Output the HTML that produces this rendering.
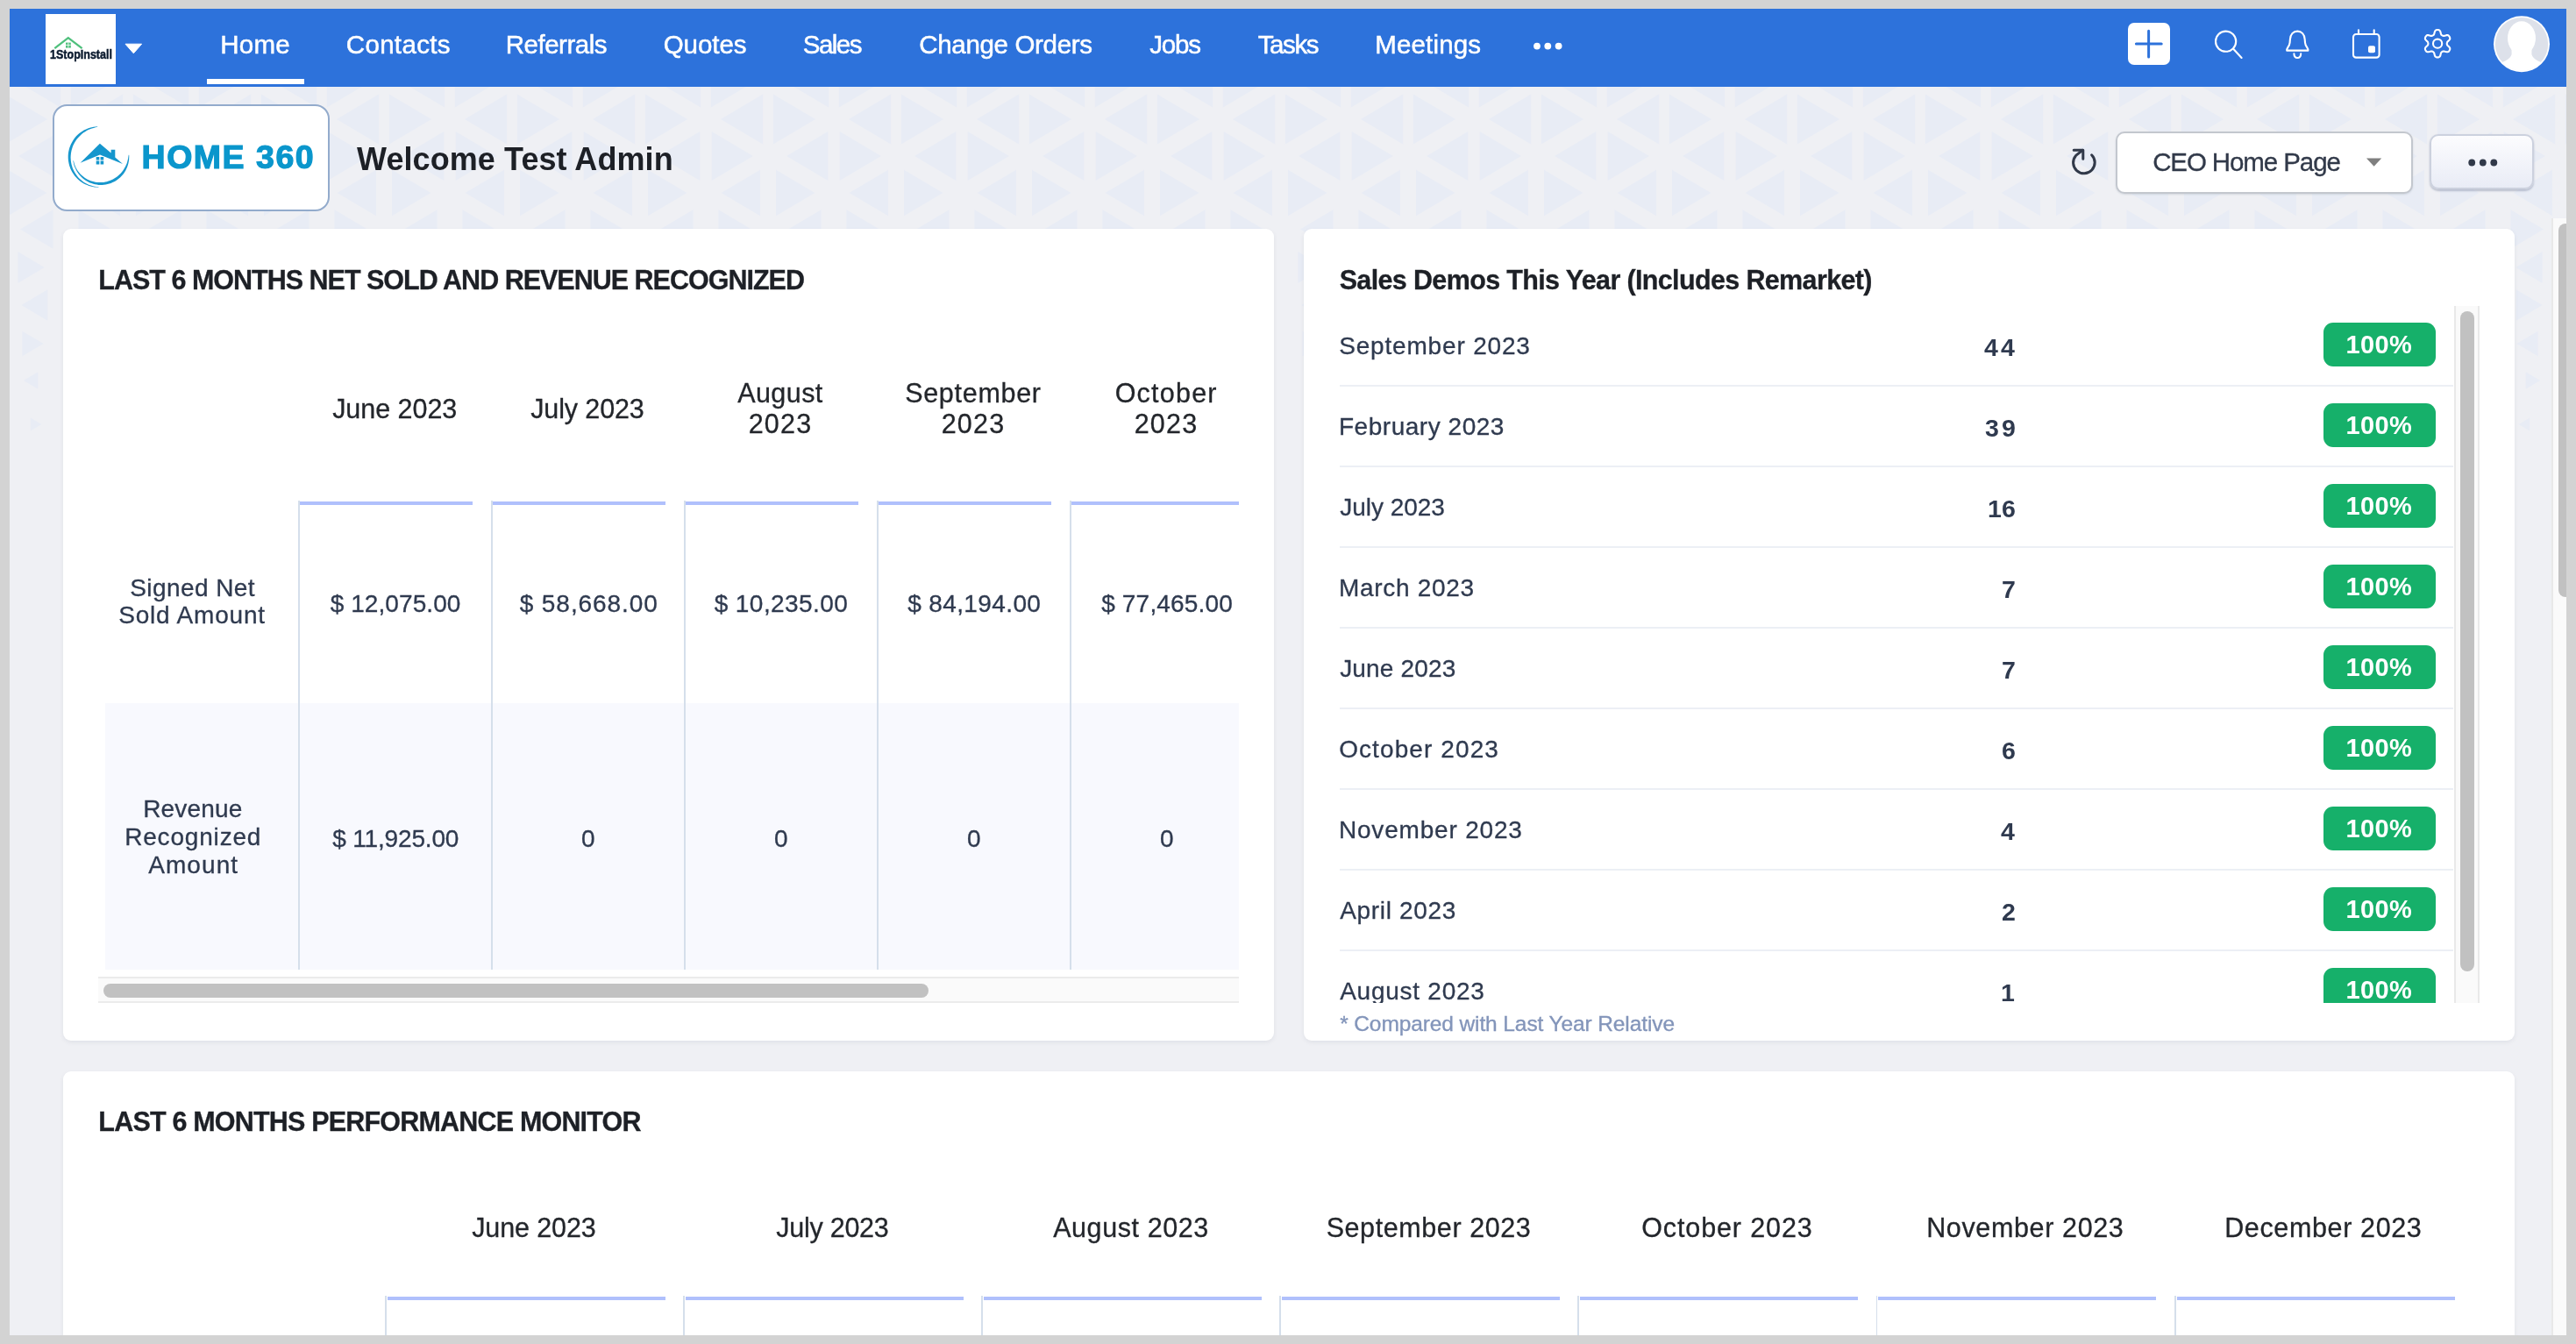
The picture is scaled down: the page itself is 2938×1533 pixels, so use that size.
<!DOCTYPE html>
<html lang="en"><head><meta charset="utf-8"><title>Home - CEO Home Page</title>
<style>
*{box-sizing:border-box}
html,body{margin:0;padding:0;width:2938px;height:1533px;background:#d3d3d3}
body{position:relative;font-family:"Liberation Sans",sans-serif}
#frame{position:absolute;left:11px;top:10px;width:2916px;height:1513px;overflow:hidden;background:#eff0f4}
#page{will-change:transform;position:absolute;left:-11px;top:-10px;width:2938px;height:1533px}
#page svg{position:absolute;left:0;top:0;overflow:visible}
.t{position:absolute;white-space:nowrap;margin:0;padding:0;font-weight:400;text-decoration:none;display:block}
.abs{position:absolute}
#navbar{position:absolute;left:11px;top:10px;width:2916px;height:89px;background:#2d72db}
#logo{position:absolute;left:52px;top:16px;width:80px;height:80px;background:#fff}
#homeul{position:absolute;left:236px;top:90.3px;width:111.3px;height:6.1px;background:#fff}
#h360box{position:absolute;left:59.8px;top:119px;width:316px;height:122.2px;background:#fff;border:2.4px solid #93abcc;border-radius:16.5px}
#ddbox{position:absolute;left:2413px;top:149.7px;width:339.2px;height:71px;background:#fff;border:2.2px solid #c3c7ce;border-radius:10px;box-shadow:0 1px 2px rgba(120,130,150,.22)}
#morebtn{position:absolute;left:2771.4px;top:152.9px;width:118.8px;height:63.6px;border:2.2px solid #ccd1de;border-radius:10px;background:linear-gradient(#fcfcfe,#e9ecf6);box-shadow:0 1.5px 2px rgba(110,120,150,.4)}
.box{position:absolute;background:#fff;border-radius:9px;box-shadow:0 2px 5px rgba(50,60,90,.08)}
#b1{left:72px;top:261px;width:1381px;height:926px}
#b2{left:1487px;top:261px;width:1381px;height:926px}
#b3{left:72px;top:1221.5px;width:2796px;height:400px}
.vl{position:absolute;width:1.5px;background:#d5dfeb}
.bar{position:absolute;height:4.4px;background:#b0c0fc}
#alt{position:absolute;left:120px;top:802px;width:1293px;height:304px;background:#f8f9fe}
#hs{position:absolute;left:112px;top:1114.2px;width:1301px;height:30px;background:#fafafa;border-top:2px solid #ebebeb;border-bottom:2px solid #ebebeb}
#hst{position:absolute;left:118px;top:1122.4px;width:941px;height:15.8px;border-radius:8px;background:#c1c1c1}
#list{position:absolute;left:0;top:0;width:2938px;height:1144px;overflow:hidden}
.sep{position:absolute;left:1528px;width:1270px;height:2px;background:#eceff5}
.badge{position:absolute;left:2650px;width:128px;height:50px;border-radius:11px;background:#16b06a}
#vs{position:absolute;left:2799px;top:348.5px;width:28.5px;height:795.5px;background:#fafafa;border-left:2px solid #e9e9e9;border-right:2px solid #e9e9e9}
#vst{position:absolute;left:2806px;top:354.5px;width:16px;height:753.5px;border-radius:8px;background:#c1c1c1}
#ps{position:absolute;left:2910px;top:249px;width:17px;height:1280px;background:#fafafa;border-left:2px solid #e8e8e8}
#pst{position:absolute;left:2918px;top:255px;width:16px;height:426px;border-radius:8px;background:#c1c1c1}

</style></head>
<body>
<div id="frame"><div id="page">
<svg id="tri" width="2938" height="700" viewBox="0 0 2938 700" aria-hidden="true"><path fill="#e8ecf5" d="M69.1 65.5V122.5L20.9 94.0zM80.9 65.5V122.5L129.1 94.0zM215.1 65.5V122.5L166.9 94.0zM226.9 65.5V122.5L275.1 94.0zM361.1 65.5V122.5L312.9 94.0zM372.9 65.5V122.5L421.1 94.0zM507.1 65.5V122.5L458.9 94.0zM518.9 65.5V122.5L567.1 94.0zM653.1 65.5V122.5L604.9 94.0zM664.9 65.5V122.5L713.1 94.0zM799.1 65.5V122.5L750.9 94.0zM810.9 65.5V122.5L859.1 94.0zM945.1 65.5V122.5L896.9 94.0zM956.9 65.5V122.5L1005.1 94.0zM1091.1 65.5V122.5L1042.9 94.0zM1102.9 65.5V122.5L1151.1 94.0zM1237.1 65.5V122.5L1188.9 94.0zM1248.9 65.5V122.5L1297.1 94.0zM1383.1 65.5V122.5L1334.9 94.0zM1394.9 65.5V122.5L1443.1 94.0zM1529.1 65.5V122.5L1480.9 94.0zM1540.9 65.5V122.5L1589.1 94.0zM1675.1 65.5V122.5L1626.9 94.0zM1686.9 65.5V122.5L1735.1 94.0zM1821.1 65.5V122.5L1772.9 94.0zM1832.9 65.5V122.5L1881.1 94.0zM1967.1 65.5V122.5L1918.9 94.0zM1978.9 65.5V122.5L2027.1 94.0zM2113.1 65.5V122.5L2064.9 94.0zM2124.9 65.5V122.5L2173.1 94.0zM2259.1 65.5V122.5L2210.9 94.0zM2270.9 65.5V122.5L2319.1 94.0zM2405.1 65.5V122.5L2356.9 94.0zM2416.9 65.5V122.5L2465.1 94.0zM2551.1 65.5V122.5L2502.9 94.0zM2562.9 65.5V122.5L2611.1 94.0zM2697.1 65.5V122.5L2648.9 94.0zM2708.9 65.5V122.5L2757.1 94.0zM2843.1 65.5V122.5L2794.9 94.0zM2854.9 65.5V122.5L2903.1 94.0zM5.9 107.5V164.5L54.1 136.0zM140.1 107.5V164.5L91.9 136.0zM151.9 107.5V164.5L200.1 136.0zM286.1 107.5V164.5L237.9 136.0zM297.9 107.5V164.5L346.1 136.0zM432.1 107.5V164.5L383.9 136.0zM443.9 107.5V164.5L492.1 136.0zM578.1 107.5V164.5L529.9 136.0zM589.9 107.5V164.5L638.1 136.0zM724.1 107.5V164.5L675.9 136.0zM735.9 107.5V164.5L784.1 136.0zM870.1 107.5V164.5L821.9 136.0zM881.9 107.5V164.5L930.1 136.0zM1016.1 107.5V164.5L967.9 136.0zM1027.9 107.5V164.5L1076.1 136.0zM1162.1 107.5V164.5L1113.9 136.0zM1173.9 107.5V164.5L1222.1 136.0zM1308.1 107.5V164.5L1259.9 136.0zM1319.9 107.5V164.5L1368.1 136.0zM1454.1 107.5V164.5L1405.9 136.0zM1465.9 107.5V164.5L1514.1 136.0zM1600.1 107.5V164.5L1551.9 136.0zM1611.9 107.5V164.5L1660.1 136.0zM1746.1 107.5V164.5L1697.9 136.0zM1757.9 107.5V164.5L1806.1 136.0zM1892.1 107.5V164.5L1843.9 136.0zM1903.9 107.5V164.5L1952.1 136.0zM2038.1 107.5V164.5L1989.9 136.0zM2049.9 107.5V164.5L2098.1 136.0zM2184.1 107.5V164.5L2135.9 136.0zM2195.9 107.5V164.5L2244.1 136.0zM2330.1 107.5V164.5L2281.9 136.0zM2341.9 107.5V164.5L2390.1 136.0zM2476.1 107.5V164.5L2427.9 136.0zM2487.9 107.5V164.5L2536.1 136.0zM2622.1 107.5V164.5L2573.9 136.0zM2633.9 107.5V164.5L2682.1 136.0zM2768.1 107.5V164.5L2719.9 136.0zM2779.9 107.5V164.5L2828.1 136.0zM2914.1 107.5V164.5L2865.9 136.0zM2925.9 107.5V164.5L2974.1 136.0zM68.3 150.1V205.9L21.1 178.0zM81.7 150.1V205.9L128.9 178.0zM214.3 150.1V205.9L167.1 178.0zM227.7 150.1V205.9L274.9 178.0zM360.3 150.1V205.9L313.1 178.0zM373.7 150.1V205.9L420.9 178.0zM506.3 150.1V205.9L459.1 178.0zM519.7 150.1V205.9L566.9 178.0zM652.3 150.1V205.9L605.1 178.0zM665.7 150.1V205.9L712.9 178.0zM798.3 150.1V205.9L751.1 178.0zM811.7 150.1V205.9L858.9 178.0zM944.3 150.1V205.9L897.1 178.0zM957.7 150.1V205.9L1004.9 178.0zM1090.3 150.1V205.9L1043.1 178.0zM1103.7 150.1V205.9L1150.9 178.0zM1236.3 150.1V205.9L1189.1 178.0zM1249.7 150.1V205.9L1296.9 178.0zM1382.3 150.1V205.9L1335.1 178.0zM1395.7 150.1V205.9L1442.9 178.0zM1528.3 150.1V205.9L1481.1 178.0zM1541.7 150.1V205.9L1588.9 178.0zM1674.3 150.1V205.9L1627.1 178.0zM1687.7 150.1V205.9L1734.9 178.0zM1820.3 150.1V205.9L1773.1 178.0zM1833.7 150.1V205.9L1880.9 178.0zM1966.3 150.1V205.9L1919.1 178.0zM1979.7 150.1V205.9L2026.9 178.0zM2112.3 150.1V205.9L2065.1 178.0zM2125.7 150.1V205.9L2172.9 178.0zM2258.3 150.1V205.9L2211.1 178.0zM2271.7 150.1V205.9L2318.9 178.0zM2404.3 150.1V205.9L2357.1 178.0zM2417.7 150.1V205.9L2464.9 178.0zM2550.3 150.1V205.9L2503.1 178.0zM2563.7 150.1V205.9L2610.9 178.0zM2696.3 150.1V205.9L2649.1 178.0zM2709.7 150.1V205.9L2756.9 178.0zM2842.3 150.1V205.9L2795.1 178.0zM2855.7 150.1V205.9L2902.9 178.0zM9.0 193.8V246.2L53.4 220.0zM137.0 193.8V246.2L92.6 220.0zM155.0 193.8V246.2L199.4 220.0zM283.0 193.8V246.2L238.6 220.0zM301.0 193.8V246.2L345.4 220.0zM429.0 193.8V246.2L384.6 220.0zM447.0 193.8V246.2L491.4 220.0zM575.0 193.8V246.2L530.6 220.0zM593.0 193.8V246.2L637.4 220.0zM721.0 193.8V246.2L676.6 220.0zM739.0 193.8V246.2L783.4 220.0zM867.0 193.8V246.2L822.6 220.0zM885.0 193.8V246.2L929.4 220.0zM1013.0 193.8V246.2L968.6 220.0zM1031.0 193.8V246.2L1075.4 220.0zM1159.0 193.8V246.2L1114.6 220.0zM1177.0 193.8V246.2L1221.4 220.0zM1305.0 193.8V246.2L1260.6 220.0zM1323.0 193.8V246.2L1367.4 220.0zM1451.0 193.8V246.2L1406.6 220.0zM1469.0 193.8V246.2L1513.4 220.0zM1597.0 193.8V246.2L1552.6 220.0zM1615.0 193.8V246.2L1659.4 220.0zM1743.0 193.8V246.2L1698.6 220.0zM1761.0 193.8V246.2L1805.4 220.0zM1889.0 193.8V246.2L1844.6 220.0zM1907.0 193.8V246.2L1951.4 220.0zM2035.0 193.8V246.2L1990.6 220.0zM2053.0 193.8V246.2L2097.4 220.0zM2181.0 193.8V246.2L2136.6 220.0zM2199.0 193.8V246.2L2243.4 220.0zM2327.0 193.8V246.2L2282.6 220.0zM2345.0 193.8V246.2L2389.4 220.0zM2473.0 193.8V246.2L2428.6 220.0zM2491.0 193.8V246.2L2535.4 220.0zM2619.0 193.8V246.2L2574.6 220.0zM2637.0 193.8V246.2L2681.4 220.0zM2765.0 193.8V246.2L2720.6 220.0zM2783.0 193.8V246.2L2827.4 220.0zM2911.0 193.8V246.2L2866.6 220.0zM60.5 239.3V283.7L22.9 261.5zM89.5 239.3V283.7L127.1 261.5zM206.5 239.3V283.7L168.9 261.5zM235.5 239.3V283.7L273.1 261.5zM352.5 239.3V283.7L314.9 261.5zM381.5 239.3V283.7L419.1 261.5zM498.5 239.3V283.7L460.9 261.5zM527.5 239.3V283.7L565.1 261.5zM644.5 239.3V283.7L606.9 261.5zM673.5 239.3V283.7L711.1 261.5zM790.5 239.3V283.7L752.9 261.5zM819.5 239.3V283.7L857.1 261.5zM936.5 239.3V283.7L898.9 261.5zM965.5 239.3V283.7L1003.1 261.5zM1082.5 239.3V283.7L1044.9 261.5zM1111.5 239.3V283.7L1149.1 261.5zM1228.5 239.3V283.7L1190.9 261.5zM1257.5 239.3V283.7L1295.1 261.5zM1374.5 239.3V283.7L1336.9 261.5zM1403.5 239.3V283.7L1441.1 261.5zM1520.5 239.3V283.7L1482.9 261.5zM1549.5 239.3V283.7L1587.1 261.5zM1666.5 239.3V283.7L1628.9 261.5zM1695.5 239.3V283.7L1733.1 261.5zM1812.5 239.3V283.7L1774.9 261.5zM1841.5 239.3V283.7L1879.1 261.5zM1958.5 239.3V283.7L1920.9 261.5zM1987.5 239.3V283.7L2025.1 261.5zM2104.5 239.3V283.7L2066.9 261.5zM2133.5 239.3V283.7L2171.1 261.5zM2250.5 239.3V283.7L2212.9 261.5zM2279.5 239.3V283.7L2317.1 261.5zM2396.5 239.3V283.7L2358.9 261.5zM2425.5 239.3V283.7L2463.1 261.5zM2542.5 239.3V283.7L2504.9 261.5zM2571.5 239.3V283.7L2609.1 261.5zM2688.5 239.3V283.7L2650.9 261.5zM2717.5 239.3V283.7L2755.1 261.5zM2834.5 239.3V283.7L2796.9 261.5zM2863.5 239.3V283.7L2901.1 261.5zM20.4 287.0V323.0L50.7 305.0zM1480.4 287.0V323.0L1510.7 305.0zM2899.6 287.0V323.0L2869.3 305.0zM54.3 330.3V365.7L24.3 348.0zM1514.3 330.3V365.7L1484.3 348.0zM2869.7 330.3V365.7L2899.7 348.0zM25.4 377.8V406.2L49.6 392.0zM1485.4 377.8V406.2L1509.6 392.0zM2894.6 377.8V406.2L2870.4 392.0zM43.3 424.3V443.7L26.9 434.0zM1503.3 424.3V443.7L1486.9 434.0zM2880.7 424.3V443.7L2897.1 434.0zM34.8 476.6V491.4L47.4 484.0zM2885.2 476.6V491.4L2872.6 484.0z"/></svg>
<nav id="nav">
<div id="navbar"></div>
<div id="logo"></div>
<div id="homeul"></div>
<svg width="2938" height="110" viewBox="0 0 2938 110" aria-hidden="true">
<g fill="none" stroke="#4fc07c" stroke-width="2.3" stroke-linecap="butt"><path d="M62.3 55.2 77.8 43.2 93.6 55.2"/></g>
<rect x="75" y="48.6" width="5.8" height="6" fill="#4fc07c"/><path d="M77.9 48.6v6M75 51.4h5.8" stroke="#fff" stroke-width=".8"/>
<path d="M143 50.2h18.6l-9.3 10.6z" fill="#fff" stroke="#fff" stroke-width="1" stroke-linejoin="round"/>
<g fill="#fff"><circle cx="1753" cy="52.6" r="3.9"/><circle cx="1765.3" cy="52.6" r="3.9"/><circle cx="1777.6" cy="52.6" r="3.9"/></g>
<rect x="2427" y="26" width="48" height="48" rx="7" fill="#fff"/>
<path d="M2436.4 50h28.8M2450.6 35.3v29.8" stroke="#2d72db" stroke-width="3" stroke-linecap="round" fill="none"/>
<g fill="none" stroke="#fff" stroke-width="2.1" stroke-linecap="round" stroke-linejoin="round">
<circle cx="2538.6" cy="47.2" r="11.6"/><path d="M2547.2 55.8 2556.6 66"/>
<path d="M2608.2 57.6C2607.6 54.6 2611.2 53.4 2611.6 48.6L2611.9 45C2612.1 39.2 2615.6 35.6 2620.3 35.6C2625 35.6 2628.5 39.2 2628.7 45L2629 48.6C2629.4 53.4 2633 54.6 2632.4 57.6Z"/>
<path d="M2616.4 61.2C2616.6 67.6 2624 67.6 2624.2 61.2"/>
<rect x="2684" y="39" width="29.6" height="26.6" rx="3.2"/><path d="M2690 34.2V39M2707.7 34.2V39"/>
<circle cx="2780.1" cy="49.7" r="5.1"/>
<path d="M2780.1 34.0L2780.8 34.0L2781.5 34.2L2782.1 34.5L2782.7 35.0L2783.2 35.8L2783.5 36.9L2783.8 38.1L2784.0 38.9L2784.3 39.5L2784.7 39.9L2785.1 40.2L2785.4 40.4L2785.9 40.7L2786.3 40.8L2786.8 40.9L2787.5 40.9L2788.3 40.7L2789.4 40.4L2790.6 40.1L2791.6 40.1L2792.3 40.3L2792.9 40.8L2793.3 41.3L2793.7 41.9L2794.0 42.5L2794.2 43.1L2794.3 43.8L2794.2 44.6L2793.7 45.4L2792.9 46.3L2792.0 47.1L2791.4 47.7L2791.0 48.3L2790.9 48.8L2790.8 49.2L2790.8 49.7L2790.8 50.2L2790.9 50.6L2791.0 51.1L2791.4 51.7L2792.0 52.3L2792.9 53.1L2793.7 54.0L2794.2 54.8L2794.3 55.6L2794.2 56.3L2794.0 56.9L2793.7 57.5L2793.3 58.1L2792.9 58.6L2792.3 59.1L2791.6 59.3L2790.6 59.3L2789.4 59.0L2788.3 58.7L2787.5 58.5L2786.8 58.5L2786.3 58.6L2785.9 58.7L2785.4 59.0L2785.1 59.2L2784.7 59.5L2784.3 59.9L2784.0 60.5L2783.8 61.3L2783.5 62.5L2783.2 63.6L2782.7 64.4L2782.1 64.9L2781.5 65.2L2780.8 65.4L2780.1 65.4L2779.4 65.4L2778.7 65.2L2778.1 64.9L2777.5 64.4L2777.0 63.6L2776.7 62.5L2776.4 61.3L2776.2 60.5L2775.9 59.9L2775.5 59.5L2775.1 59.2L2774.8 59.0L2774.3 58.7L2773.9 58.6L2773.4 58.5L2772.7 58.5L2771.9 58.7L2770.8 59.0L2769.6 59.3L2768.6 59.3L2767.9 59.1L2767.3 58.6L2766.9 58.1L2766.5 57.6L2766.2 56.9L2766.0 56.3L2765.9 55.6L2766.0 54.8L2766.5 54.0L2767.3 53.1L2768.2 52.3L2768.8 51.7L2769.2 51.1L2769.3 50.6L2769.4 50.2L2769.4 49.7L2769.4 49.2L2769.3 48.8L2769.2 48.3L2768.8 47.7L2768.2 47.1L2767.3 46.3L2766.5 45.4L2766.0 44.6L2765.9 43.8L2766.0 43.1L2766.2 42.5L2766.5 41.9L2766.9 41.3L2767.3 40.8L2767.9 40.3L2768.6 40.1L2769.6 40.1L2770.8 40.4L2771.9 40.7L2772.7 40.9L2773.4 40.9L2773.9 40.8L2774.3 40.7L2774.8 40.4L2775.1 40.2L2775.5 39.9L2775.9 39.5L2776.2 38.9L2776.4 38.1L2776.7 36.9L2777.0 35.8L2777.5 35.0L2778.1 34.5L2778.7 34.2L2779.4 34.0Z"/>
</g>
<rect x="2701" y="52.3" width="8" height="8" rx="2" fill="#fff"/>
<circle cx="2876" cy="50.2" r="32" fill="#fff"/>
<circle cx="2876" cy="50.2" r="30.2" fill="#dde1ea"/>
<g fill="#fff"><ellipse cx="2876" cy="43.5" rx="16" ry="19.2"/><path d="M2853.8 71C2858.5 69.4 2863.4 66.4 2864.6 62L2864.5 55H2887.5L2887.4 62C2888.6 66.4 2893.5 69.4 2898.2 71A30.4 30.4 0 0 1 2853.8 71Z"/></g>
</svg>

<strong class="t logo" style="left:56.90px;top:52.13px;font-size:15.5px;line-height:19px;letter-spacing:0.0px;color:#0b1a2e;font-weight:700;-webkit-text-stroke:0.5px #0b1a2e;transform:scaleX(0.8076);transform-origin:0 0">1StopInstall</strong>
<a class="t nav" style="left:251.25px;top:33.28px;font-size:29.5px;line-height:35px;letter-spacing:0.239px;color:#fff;-webkit-text-stroke:0.5px #fff">Home</a>
<a class="t nav" style="left:394.75px;top:33.28px;font-size:29.5px;line-height:35px;letter-spacing:0.333px;color:#fff;-webkit-text-stroke:0.5px #fff">Contacts</a>
<a class="t nav" style="left:576.75px;top:33.28px;font-size:29.5px;line-height:35px;letter-spacing:-0.49px;color:#fff;-webkit-text-stroke:0.5px #fff">Referrals</a>
<a class="t nav" style="left:756.75px;top:33.28px;font-size:29.5px;line-height:35px;letter-spacing:-0.072px;color:#fff;-webkit-text-stroke:0.5px #fff">Quotes</a>
<a class="t nav" style="left:915.75px;top:33.28px;font-size:29.5px;line-height:35px;letter-spacing:-1.511px;color:#fff;-webkit-text-stroke:0.5px #fff">Sales</a>
<a class="t nav" style="left:1048.25px;top:33.28px;font-size:29.5px;line-height:35px;letter-spacing:-0.328px;color:#fff;-webkit-text-stroke:0.5px #fff">Change Orders</a>
<a class="t nav" style="left:1311.25px;top:33.28px;font-size:29.5px;line-height:35px;letter-spacing:-1.188px;color:#fff;-webkit-text-stroke:0.5px #fff">Jobs</a>
<a class="t nav" style="left:1434.75px;top:33.28px;font-size:29.5px;line-height:35px;letter-spacing:-1.414px;color:#fff;-webkit-text-stroke:0.5px #fff">Tasks</a>
<a class="t nav" style="left:1568.25px;top:33.28px;font-size:29.5px;line-height:35px;letter-spacing:0.15px;color:#fff;-webkit-text-stroke:0.5px #fff">Meetings</a>
</nav>
<header id="hdr">
<div id="h360box"></div>
<div id="ddbox"></div>
<div id="morebtn"></div>
<svg width="2938" height="260" viewBox="0 0 2938 260" aria-hidden="true">
<path d="M111.2 144.3L108.9 144.5L106.7 144.8L104.5 145.2L102.4 145.8L100.2 146.5L98.1 147.4L96.1 148.3L94.2 149.5L92.3 150.7L90.5 152.1L88.8 153.5L87.2 155.1L85.7 156.8L84.4 158.6L83.1 160.4L82.0 162.4L80.9 164.4L80.1 166.4L79.3 168.5L78.7 170.7L78.2 172.9L77.9 175.1L77.7 177.4L77.7 179.6L77.8 181.8L78.1 184.1L78.5 186.3L79.0 188.5L79.7 190.6L80.5 192.7L81.5 194.7L82.6 196.7L83.8 198.6L85.1 200.4L86.5 202.1L88.1 203.7L89.7 205.3L91.5 206.7L93.3 208.0L95.2 209.2L97.2 210.2L99.3 211.1L101.4 211.9L103.5 212.5L105.7 213.0L107.9 213.4L110.2 213.6L112.4 213.7L112.4 213.2L110.2 213.0L108.0 212.7L105.9 212.2L103.8 211.6L101.7 210.9L99.7 210.0L97.8 209.0L95.9 207.9L94.2 206.7L92.5 205.3L90.9 203.9L89.4 202.4L88.0 200.8L86.8 199.1L85.6 197.3L84.6 195.5L83.6 193.6L82.8 191.7L82.2 189.7L81.6 187.7L81.2 185.7L80.9 183.7L80.7 181.6L80.6 179.6L80.7 177.5L80.9 175.5L81.2 173.4L81.6 171.4L82.2 169.4L82.8 167.5L83.6 165.6L84.5 163.8L85.5 162.0L86.6 160.2L87.8 158.5L89.2 156.9L90.6 155.4L92.1 154.0L93.7 152.6L95.3 151.3L97.1 150.2L98.9 149.1L100.8 148.1L102.8 147.3L104.8 146.5L106.9 145.9L109.0 145.3L111.2 144.8Z" fill="#1797cd"/>
<path d="M83.4 183.4L83.8 185.4L84.2 187.4L84.8 189.4L85.6 191.3L86.4 193.1L87.4 194.9L88.5 196.7L89.7 198.4L91.0 200.0L92.4 201.5L93.9 202.9L95.4 204.2L97.1 205.4L98.8 206.5L100.6 207.5L102.5 208.4L104.4 209.1L106.4 209.8L108.3 210.3L110.4 210.6L112.4 210.9L114.5 211.0L116.5 211.0L118.6 210.8L120.6 210.5L122.6 210.1L124.6 209.6L126.5 208.9L128.4 208.1L130.3 207.2L132.1 206.2L133.8 205.1L135.4 203.8L137.0 202.5L138.4 201.1L139.8 199.5L141.1 197.9L142.2 196.2L143.3 194.5L144.2 192.6L145.0 190.8L145.7 188.8L146.3 186.8L146.7 184.8L147.1 182.8L147.2 180.8L147.3 178.7L147.2 176.7L146.7 176.7L146.4 178.7L146.1 180.7L145.7 182.6L145.2 184.5L144.6 186.4L143.8 188.2L143.0 190.0L142.1 191.6L141.1 193.3L140.1 194.8L138.9 196.3L137.7 197.7L136.3 199.1L135.0 200.3L133.5 201.5L132.0 202.6L130.4 203.6L128.8 204.5L127.1 205.3L125.4 206.0L123.7 206.6L121.9 207.2L120.1 207.6L118.2 207.9L116.4 208.0L114.5 208.1L112.6 208.1L110.8 207.9L108.9 207.7L107.1 207.3L105.2 206.8L103.4 206.2L101.6 205.5L99.9 204.7L98.2 203.7L96.6 202.7L95.1 201.5L93.6 200.3L92.1 198.9L90.8 197.5L89.6 196.0L88.4 194.4L87.4 192.7L86.4 190.9L85.6 189.1L84.9 187.2L84.4 185.3L83.9 183.3Z" fill="#1797cd"/>
<path d="M91.6 185.8 113.9 163.8 126.6 174.6V170.8H131.3V179.6L140 186.9 114 176.4Z" fill="#1596cd"/>
<path d="M109.7 179h3.6v3.6h-3.6zM114.6 179h3.6v3.6h-3.6zM109.7 183.6h3.6v3.8h-3.6zM114.6 183.6h3.6v3.8h-3.6z" fill="#1596cd"/>
<g fill="none" stroke="#313949" stroke-width="3" stroke-linecap="round" stroke-linejoin="round">
<path d="M2385.6 176.8A12.3 12.3 0 1 1 2367.6 177.4L2375.2 171.4"/>
<path d="M2365.2 171.2H2375.8V181.2"/>
</g>
<path d="M2699 180.4h17.2l-8.6 9.4z" fill="#7f7f7f"/>
<g fill="#313949"><circle cx="2819.2" cy="185.5" r="3.9"/><circle cx="2831.8" cy="185.5" r="3.9"/><circle cx="2844.3" cy="185.5" r="3.9"/></g>
</svg>

<strong class="t h360" style="left:161.60px;top:157.11px;font-size:37.5px;line-height:45px;letter-spacing:1.51px;color:#0a96cc;font-weight:700;-webkit-text-stroke:1.2px #0a96cc">HOME 360</strong>
<h1 class="t welcome" style="left:407.00px;top:159.78px;font-size:36.0px;line-height:43px;letter-spacing:0.074px;color:#1d2026;font-weight:700">Welcome Test Admin</h1>
<span class="t dd" style="left:2455.15px;top:167.28px;font-size:29.5px;line-height:35px;letter-spacing:-1.1px;color:#313949;-webkit-text-stroke:0.3px #313949">CEO Home Page</span>
</header>
<section id="c1">
<div class="box" id="b1"></div>
<div id="alt"></div>
<div class="vl" style="left:340.4px;top:570.5px;height:535.5px"></div>
<div class="bar" style="left:342px;top:572.1px;width:196.6px"></div>
<div class="vl" style="left:560.4px;top:570.5px;height:535.5px"></div>
<div class="bar" style="left:562px;top:572.1px;width:196.6px"></div>
<div class="vl" style="left:780.4px;top:570.5px;height:535.5px"></div>
<div class="bar" style="left:782px;top:572.1px;width:196.6px"></div>
<div class="vl" style="left:1000.4px;top:570.5px;height:535.5px"></div>
<div class="bar" style="left:1002px;top:572.1px;width:196.6px"></div>
<div class="vl" style="left:1220.4px;top:570.5px;height:535.5px"></div>
<div class="bar" style="left:1222px;top:572.1px;width:191px"></div>
<div id="hs"></div><div id="hst"></div>
<h2 class="t title" style="left:112.35px;top:300.93px;font-size:30.5px;line-height:37px;letter-spacing:-0.999px;color:#1d2026;font-weight:700;-webkit-text-stroke:0.3px #1d2026">LAST 6 MONTHS NET SOLD AND REVENUE RECOGNIZED</h2>
<span class="t th" style="left:379.15px;top:448.43px;font-size:30.5px;line-height:37px;letter-spacing:-0.037px;color:#23262b;-webkit-text-stroke:0.3px #23262b">June 2023</span>
<span class="t th" style="left:605.15px;top:448.43px;font-size:30.5px;line-height:37px;letter-spacing:-0.113px;color:#23262b;-webkit-text-stroke:0.3px #23262b">July 2023</span>
<span class="t th" style="left:841.15px;top:429.93px;font-size:30.5px;line-height:37px;letter-spacing:0.444px;color:#23262b;-webkit-text-stroke:0.3px #23262b">August</span>
<span class="t th" style="left:853.65px;top:464.93px;font-size:30.5px;line-height:37px;letter-spacing:1.271px;color:#23262b;-webkit-text-stroke:0.3px #23262b">2023</span>
<span class="t th" style="left:1032.15px;top:429.93px;font-size:30.5px;line-height:37px;letter-spacing:0.708px;color:#23262b;-webkit-text-stroke:0.3px #23262b">September</span>
<span class="t th" style="left:1073.65px;top:464.93px;font-size:30.5px;line-height:37px;letter-spacing:1.271px;color:#23262b;-webkit-text-stroke:0.3px #23262b">2023</span>
<span class="t th" style="left:1271.65px;top:429.93px;font-size:30.5px;line-height:37px;letter-spacing:1.227px;color:#23262b;-webkit-text-stroke:0.3px #23262b">October</span>
<span class="t th" style="left:1293.65px;top:464.93px;font-size:30.5px;line-height:37px;letter-spacing:1.271px;color:#23262b;-webkit-text-stroke:0.3px #23262b">2023</span>
<span class="t td" style="left:148.15px;top:653.80px;font-size:28.0px;line-height:34px;letter-spacing:0.438px;color:#2f3a4f;-webkit-text-stroke:0.3px #2f3a4f">Signed Net</span>
<span class="t td" style="left:135.15px;top:685.30px;font-size:28.0px;line-height:34px;letter-spacing:0.816px;color:#2f3a4f;-webkit-text-stroke:0.3px #2f3a4f">Sold Amount</span>
<span class="t td" style="left:376.65px;top:671.80px;font-size:28.0px;line-height:34px;letter-spacing:0.086px;color:#2f3a4f;-webkit-text-stroke:0.3px #2f3a4f">$ 12,075.00</span>
<span class="t td" style="left:592.65px;top:671.80px;font-size:28.0px;line-height:34px;letter-spacing:0.936px;color:#2f3a4f;-webkit-text-stroke:0.3px #2f3a4f">$ 58,668.00</span>
<span class="t td" style="left:814.65px;top:671.80px;font-size:28.0px;line-height:34px;letter-spacing:0.436px;color:#2f3a4f;-webkit-text-stroke:0.3px #2f3a4f">$ 10,235.00</span>
<span class="t td" style="left:1035.15px;top:671.80px;font-size:28.0px;line-height:34px;letter-spacing:0.386px;color:#2f3a4f;-webkit-text-stroke:0.3px #2f3a4f">$ 84,194.00</span>
<span class="t td" style="left:1256.15px;top:671.80px;font-size:28.0px;line-height:34px;letter-spacing:0.186px;color:#2f3a4f;-webkit-text-stroke:0.3px #2f3a4f">$ 77,465.00</span>
<span class="t td" style="left:163.15px;top:905.80px;font-size:28.0px;line-height:34px;letter-spacing:0.198px;color:#2f3a4f;-webkit-text-stroke:0.3px #2f3a4f">Revenue</span>
<span class="t td" style="left:142.15px;top:937.80px;font-size:28.0px;line-height:34px;letter-spacing:0.822px;color:#2f3a4f;-webkit-text-stroke:0.3px #2f3a4f">Recognized</span>
<span class="t td" style="left:169.15px;top:969.80px;font-size:28.0px;line-height:34px;letter-spacing:1.097px;color:#2f3a4f;-webkit-text-stroke:0.3px #2f3a4f">Amount</span>
<span class="t td" style="left:379.15px;top:939.80px;font-size:28.0px;line-height:34px;letter-spacing:-0.157px;color:#2f3a4f;-webkit-text-stroke:0.3px #2f3a4f">$ 11,925.00</span>
<span class="t td" style="left:663.00px;top:939.80px;font-size:28.0px;line-height:34px;letter-spacing:0.0px;color:#2f3a4f;-webkit-text-stroke:0.3px #2f3a4f">0</span>
<span class="t td" style="left:883.00px;top:939.80px;font-size:28.0px;line-height:34px;letter-spacing:0.0px;color:#2f3a4f;-webkit-text-stroke:0.3px #2f3a4f">0</span>
<span class="t td" style="left:1103.00px;top:939.80px;font-size:28.0px;line-height:34px;letter-spacing:0.0px;color:#2f3a4f;-webkit-text-stroke:0.3px #2f3a4f">0</span>
<span class="t td" style="left:1323.00px;top:939.80px;font-size:28.0px;line-height:34px;letter-spacing:0.0px;color:#2f3a4f;-webkit-text-stroke:0.3px #2f3a4f">0</span>
</section>
<section id="c2">
<div class="box" id="b2"></div>
<h2 class="t title" style="left:1527.65px;top:300.93px;font-size:30.5px;line-height:37px;letter-spacing:-0.641px;color:#1d2026;font-weight:700;-webkit-text-stroke:0.3px #1d2026">Sales Demos This Year (Includes Remarket)</h2>
<div id="list">
<div class="sep" style="top:438.6px"></div>
<div class="badge" style="top:368.4px"></div>
<div class="sep" style="top:530.6px"></div>
<div class="badge" style="top:460.4px"></div>
<div class="sep" style="top:622.6px"></div>
<div class="badge" style="top:552.4px"></div>
<div class="sep" style="top:714.6px"></div>
<div class="badge" style="top:644.4px"></div>
<div class="sep" style="top:806.6px"></div>
<div class="badge" style="top:736.4px"></div>
<div class="sep" style="top:898.6px"></div>
<div class="badge" style="top:828.4px"></div>
<div class="sep" style="top:990.6px"></div>
<div class="badge" style="top:920.4px"></div>
<div class="sep" style="top:1082.6px"></div>
<div class="badge" style="top:1012.4px"></div>
<div class="sep" style="top:1174.6px"></div>
<div class="badge" style="top:1104.4px"></div>
<span class="t li" style="left:1527.15px;top:378.10px;font-size:28.0px;line-height:34px;letter-spacing:0.826px;color:#2f3a4f;-webkit-text-stroke:0.3px #2f3a4f">September 2023</span>
<b class="t num" style="left:2263.00px;top:378.62px;font-size:28.5px;line-height:34px;letter-spacing:3.15px;color:#2f3a4f;font-weight:700">44</b>
<b class="t pct" style="left:2675.50px;top:375.65px;font-size:29.0px;line-height:35px;letter-spacing:0.372px;color:#fff;font-weight:700">100%</b>
<span class="t li" style="left:1526.95px;top:470.10px;font-size:28.0px;line-height:34px;letter-spacing:0.53px;color:#2f3a4f;-webkit-text-stroke:0.3px #2f3a4f">February 2023</span>
<b class="t num" style="left:2264.00px;top:470.62px;font-size:28.5px;line-height:34px;letter-spacing:3.15px;color:#2f3a4f;font-weight:700">39</b>
<b class="t pct" style="left:2675.50px;top:467.65px;font-size:29.0px;line-height:35px;letter-spacing:0.372px;color:#fff;font-weight:700">100%</b>
<span class="t li" style="left:1528.15px;top:562.10px;font-size:28.0px;line-height:34px;letter-spacing:-0.011px;color:#2f3a4f;-webkit-text-stroke:0.3px #2f3a4f">July 2023</span>
<b class="t num" style="left:2267.00px;top:562.62px;font-size:28.5px;line-height:34px;letter-spacing:0.15px;color:#2f3a4f;font-weight:700">16</b>
<b class="t pct" style="left:2675.50px;top:559.65px;font-size:29.0px;line-height:35px;letter-spacing:0.372px;color:#fff;font-weight:700">100%</b>
<span class="t li" style="left:1526.95px;top:654.10px;font-size:28.0px;line-height:34px;letter-spacing:0.701px;color:#2f3a4f;-webkit-text-stroke:0.3px #2f3a4f">March 2023</span>
<b class="t num" style="left:2283.00px;top:654.62px;font-size:28.5px;line-height:34px;letter-spacing:0px;color:#2f3a4f;font-weight:700">7</b>
<b class="t pct" style="left:2675.50px;top:651.65px;font-size:29.0px;line-height:35px;letter-spacing:0.372px;color:#fff;font-weight:700">100%</b>
<span class="t li" style="left:1528.15px;top:746.10px;font-size:28.0px;line-height:34px;letter-spacing:0.186px;color:#2f3a4f;-webkit-text-stroke:0.3px #2f3a4f">June 2023</span>
<b class="t num" style="left:2283.00px;top:746.62px;font-size:28.5px;line-height:34px;letter-spacing:0px;color:#2f3a4f;font-weight:700">7</b>
<b class="t pct" style="left:2675.50px;top:743.65px;font-size:29.0px;line-height:35px;letter-spacing:0.372px;color:#fff;font-weight:700">100%</b>
<span class="t li" style="left:1527.15px;top:838.10px;font-size:28.0px;line-height:34px;letter-spacing:1.1px;color:#2f3a4f;-webkit-text-stroke:0.3px #2f3a4f">October 2023</span>
<b class="t num" style="left:2283.00px;top:838.62px;font-size:28.5px;line-height:34px;letter-spacing:0px;color:#2f3a4f;font-weight:700">6</b>
<b class="t pct" style="left:2675.50px;top:835.65px;font-size:29.0px;line-height:35px;letter-spacing:0.372px;color:#fff;font-weight:700">100%</b>
<span class="t li" style="left:1526.95px;top:930.10px;font-size:28.0px;line-height:34px;letter-spacing:0.812px;color:#2f3a4f;-webkit-text-stroke:0.3px #2f3a4f">November 2023</span>
<b class="t num" style="left:2282.00px;top:930.62px;font-size:28.5px;line-height:34px;letter-spacing:0px;color:#2f3a4f;font-weight:700">4</b>
<b class="t pct" style="left:2675.50px;top:927.65px;font-size:29.0px;line-height:35px;letter-spacing:0.372px;color:#fff;font-weight:700">100%</b>
<span class="t li" style="left:1528.15px;top:1022.10px;font-size:28.0px;line-height:34px;letter-spacing:0.688px;color:#2f3a4f;-webkit-text-stroke:0.3px #2f3a4f">April 2023</span>
<b class="t num" style="left:2283.00px;top:1022.62px;font-size:28.5px;line-height:34px;letter-spacing:0px;color:#2f3a4f;font-weight:700">2</b>
<b class="t pct" style="left:2675.50px;top:1019.65px;font-size:29.0px;line-height:35px;letter-spacing:0.372px;color:#fff;font-weight:700">100%</b>
<span class="t li" style="left:1528.15px;top:1114.10px;font-size:28.0px;line-height:34px;letter-spacing:0.753px;color:#2f3a4f;-webkit-text-stroke:0.3px #2f3a4f">August 2023</span>
<b class="t num" style="left:2282.00px;top:1114.62px;font-size:28.5px;line-height:34px;letter-spacing:0px;color:#2f3a4f;font-weight:700">1</b>
<b class="t pct" style="left:2675.50px;top:1111.65px;font-size:29.0px;line-height:35px;letter-spacing:0.372px;color:#fff;font-weight:700">100%</b>
</div>
<div id="vs"></div><div id="vst"></div>
<small class="t note" style="left:1528.17px;top:1152.61px;font-size:24.5px;line-height:29px;letter-spacing:-0.108px;color:#8395ba;-webkit-text-stroke:0.35px #8395ba">* Compared with Last Year Relative</small>
</section>
<section id="c3">
<div class="box" id="b3"></div>
<div class="vl" style="left:439.4px;top:1477.5px;height:60px"></div>
<div class="bar" style="left:441.5px;top:1478.9px;width:317px"></div>
<div class="vl" style="left:779.4px;top:1477.5px;height:60px"></div>
<div class="bar" style="left:781.5px;top:1478.9px;width:317px"></div>
<div class="vl" style="left:1119.4px;top:1477.5px;height:60px"></div>
<div class="bar" style="left:1121.5px;top:1478.9px;width:317px"></div>
<div class="vl" style="left:1459.4px;top:1477.5px;height:60px"></div>
<div class="bar" style="left:1461.5px;top:1478.9px;width:317px"></div>
<div class="vl" style="left:1799.4px;top:1477.5px;height:60px"></div>
<div class="bar" style="left:1801.5px;top:1478.9px;width:317px"></div>
<div class="vl" style="left:2139.9px;top:1477.5px;height:60px"></div>
<div class="bar" style="left:2142.0px;top:1478.9px;width:317px"></div>
<div class="vl" style="left:2480.4px;top:1477.5px;height:60px"></div>
<div class="bar" style="left:2482.5px;top:1478.9px;width:317px"></div>
<h2 class="t title" style="left:112.35px;top:1260.83px;font-size:30.5px;line-height:37px;letter-spacing:-0.809px;color:#1d2026;font-weight:700;-webkit-text-stroke:0.3px #1d2026">LAST 6 MONTHS PERFORMANCE MONITOR</h2>
<span class="t th" style="left:538.15px;top:1381.93px;font-size:30.5px;line-height:37px;letter-spacing:-0.1px;color:#23262b;-webkit-text-stroke:0.3px #23262b">June 2023</span>
<span class="t th" style="left:885.15px;top:1381.93px;font-size:30.5px;line-height:37px;letter-spacing:-0.238px;color:#23262b;-webkit-text-stroke:0.3px #23262b">July 2023</span>
<span class="t th" style="left:1201.15px;top:1381.93px;font-size:30.5px;line-height:37px;letter-spacing:0.588px;color:#23262b;-webkit-text-stroke:0.3px #23262b">August 2023</span>
<span class="t th" style="left:1512.65px;top:1381.93px;font-size:30.5px;line-height:37px;letter-spacing:0.588px;color:#23262b;-webkit-text-stroke:0.3px #23262b">September 2023</span>
<span class="t th" style="left:1872.15px;top:1381.93px;font-size:30.5px;line-height:37px;letter-spacing:0.895px;color:#23262b;-webkit-text-stroke:0.3px #23262b">October 2023</span>
<span class="t th" style="left:2197.15px;top:1381.93px;font-size:30.5px;line-height:37px;letter-spacing:0.637px;color:#23262b;-webkit-text-stroke:0.3px #23262b">November 2023</span>
<span class="t th" style="left:2537.15px;top:1381.93px;font-size:30.5px;line-height:37px;letter-spacing:0.637px;color:#23262b;-webkit-text-stroke:0.3px #23262b">December 2023</span>
</section>
<div id="ps"></div><div id="pst"></div>
</div></div>
</body></html>
